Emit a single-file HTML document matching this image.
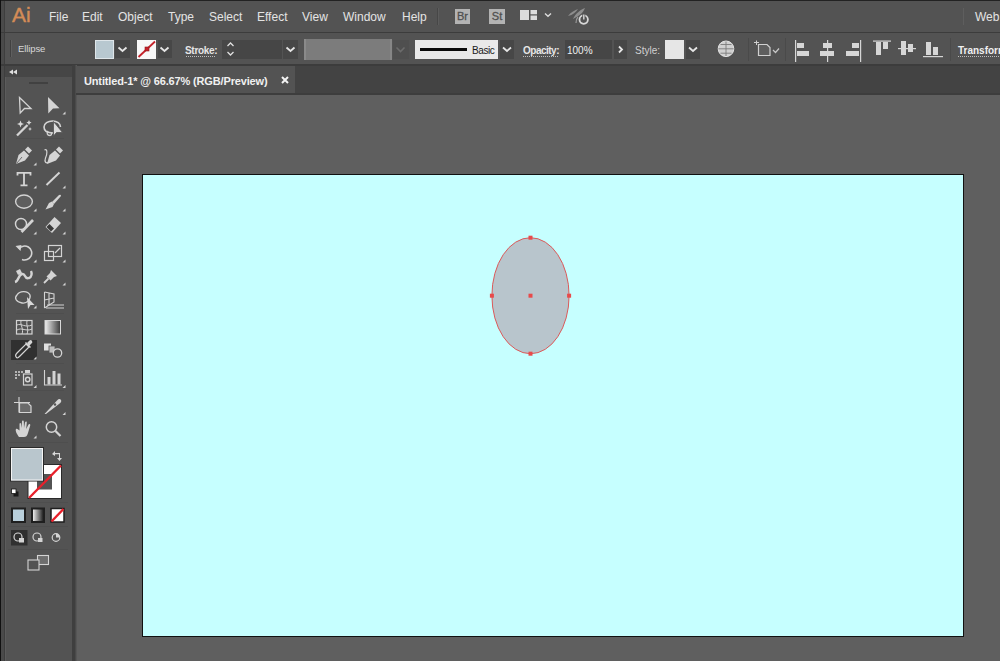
<!DOCTYPE html>
<html><head><meta charset="utf-8">
<style>
*{margin:0;padding:0;box-sizing:border-box}
html,body{width:1000px;height:661px;overflow:hidden;background:#535353;font-family:"Liberation Sans",sans-serif;}
.a{position:absolute}
.mt{position:absolute;top:10px;font-size:12px;color:#e4e4e4;line-height:14px;white-space:nowrap}
.ct{position:absolute;font-size:10px;color:#dcdcdc;line-height:12px;white-space:nowrap}
</style></head><body>
<!-- outer frame -->
<div class="a" style="left:0;top:0;width:1000px;height:1px;background:#222"></div>
<div class="a" style="left:0;top:0;width:1px;height:661px;background:#111"></div>
<div class="a" style="left:1px;top:1px;width:3px;height:660px;background:#4a4a4a"></div>
<div class="a" style="left:4px;top:1px;width:1px;height:660px;background:#3e3e3e"></div>
<!-- menubar -->
<div class="a" style="left:5px;top:1px;width:995px;height:31px;background:#535353"></div>
<div class="a" style="left:1px;top:32px;width:999px;height:1px;background:#3c3c3c"></div>
<div class="a" style="left:12px;top:3px;font-size:21px;color:#d48c57;line-height:24px;font-weight:normal;letter-spacing:0px;-webkit-text-stroke:0.4px #d48c57">Ai</div>
<div class="mt" style="left:49px">File</div>
<div class="mt" style="left:82px">Edit</div>
<div class="mt" style="left:118px">Object</div>
<div class="mt" style="left:168px">Type</div>
<div class="mt" style="left:209px">Select</div>
<div class="mt" style="left:257px">Effect</div>
<div class="mt" style="left:302px">View</div>
<div class="mt" style="left:343px">Window</div>
<div class="mt" style="left:402px">Help</div>
<div class="mt" style="left:975px">Web</div>

<!-- control bar -->
<div class="a" style="left:5px;top:33px;width:995px;height:31px;background:#535353"></div>
<div class="a" style="left:1px;top:64px;width:999px;height:2px;background:#3c3c3c"></div>
<div class="ct" style="left:18px;top:43px;font-size:9.5px;letter-spacing:-0.1px;color:#d8d8d8">Ellipse</div>


<!-- menubar icons -->
<div class="a" style="left:437px;top:8px;width:1px;height:17px;background:#474747"></div>
<div class="a" style="left:438px;top:8px;width:1px;height:17px;background:#5c5c5c"></div>
<div class="a" style="left:455px;top:9px;width:15px;height:15px;background:#b3b3b3;color:#505050;font-size:11px;font-weight:normal;line-height:15px;text-align:center;letter-spacing:0px;-webkit-text-stroke:0.3px #505050">Br</div>
<div class="a" style="left:489px;top:9px;width:16px;height:15px;background:#b3b3b3;color:#505050;font-size:11px;font-weight:normal;line-height:15px;text-align:center;letter-spacing:0px;-webkit-text-stroke:0.3px #505050">St</div>
<div class="a" style="left:963px;top:8px;width:1px;height:17px;background:#5e5e5e"></div>
<svg class="a" style="left:0;top:0" width="1000" height="66">
  <rect x="520" y="10" width="9" height="10" fill="#dcdcdc"/>
  <rect x="530.5" y="10" width="6.5" height="4.3" fill="#dcdcdc"/>
  <rect x="530.5" y="15.5" width="6.5" height="4.5" fill="#dcdcdc"/>
  <path d="M545,13.5 L548,16.3 L551,13.5" fill="none" stroke="#dcdcdc" stroke-width="1.4"/>
  <path d="M568,16 C571,12 575,10 578,9 C576,12 573,15 568,16 Z" fill="#8e8e8e"/>
  <path d="M573,19 C575,14 580,10 585,8 C583,13 579,16 573,19 Z" fill="#8e8e8e"/>
  <path d="M576,23 C576,20 577,18 578,17" stroke="#9a9a9a" stroke-width="1.2" fill="none"/>
  <circle cx="583.7" cy="19.6" r="4.2" fill="#535353" stroke="#d8d8d8" stroke-width="1.8"/>
  <path d="M583.8,14 L583.8,19.5" stroke="#535353" stroke-width="3"/>
  <path d="M583.8,14.5 L583.8,19.5" stroke="#d8d8d8" stroke-width="1.4"/>
  <!-- control bar -->
  <path d="M10.5,40 L10.5,57" stroke="#414141" stroke-width="1"/>
  <path d="M11.5,40 L11.5,57" stroke="#5f5f5f" stroke-width="1"/>
  <rect x="95.5" y="40.5" width="18" height="18" fill="#b8c8d0" stroke="#dfe6ea" stroke-width="1"/>
  <rect x="115" y="40" width="15" height="18" fill="#474747"/>
  <path d="M118.5,47.5 L122.5,51 L126.5,47.5" fill="none" stroke="#e6e6e6" stroke-width="1.8"/>
  <rect x="137" y="40" width="19" height="19" fill="#f8f8f8"/>
  <path d="M138.5,57 L155,41.5" stroke="#c4222a" stroke-width="1.8"/>
  <rect x="145" y="47" width="4" height="4" fill="#c8202a" stroke="#8a1a1a" stroke-width="0.6"/>
  <rect x="158" y="40" width="14" height="18" fill="#474747"/>
  <path d="M160.5,47.5 L164.5,51 L168.5,47.5" fill="none" stroke="#e6e6e6" stroke-width="1.8"/>
  <path d="M186,56.5 L216,56.5" stroke="#bdbdbd" stroke-width="1" stroke-dasharray="1,1"/>
  <rect x="222" y="40" width="18" height="19" fill="#474747"/>
  <path d="M227.5,46 L230.5,43 L233.5,46 M227.5,52 L230.5,55 L233.5,52" fill="none" stroke="#e0e0e0" stroke-width="1.3"/>
  <rect x="240" y="40" width="42" height="19" fill="#464646"/>
  <rect x="283" y="40" width="15" height="19" fill="#474747"/>
  <path d="M286.5,47.5 L290.5,51 L294.5,47.5" fill="none" stroke="#e6e6e6" stroke-width="1.8"/>
  <rect x="304" y="39" width="88" height="21" fill="#7c7c7c"/>
  <rect x="304" y="39" width="2" height="21" fill="#8a8a8a"/>
  <rect x="390" y="39" width="2" height="21" fill="#868686"/>
  <rect x="393" y="40" width="16" height="19" fill="#4f4f4f"/><path d="M396.5,47.5 L400.5,51.5 L404.5,47.5" fill="none" stroke="#6c6c6c" stroke-width="1.6"/>
  <rect x="415" y="40" width="83" height="19" fill="#e9e9e9"/>
  <rect x="420" y="48" width="47" height="3" fill="#0a0a0a"/>
  <rect x="500" y="40" width="14" height="19" fill="#474747"/>
  <path d="M503,47.5 L507,51 L511,47.5" fill="none" stroke="#e6e6e6" stroke-width="1.8"/>
  <path d="M523,56.5 L558,56.5" stroke="#bdbdbd" stroke-width="1" stroke-dasharray="1,1"/>
  <rect x="565" y="40" width="47" height="19" fill="#464646"/>
  <rect x="614" y="40" width="13" height="19" fill="#474747"/>
  <path d="M619,46.5 L622,49.5 L619,52.5" fill="none" stroke="#e6e6e6" stroke-width="1.8"/>
  <rect x="665" y="40" width="19" height="19" fill="#e6e6e6"/>
  <rect x="686" y="40" width="14" height="19" fill="#474747"/>
  <path d="M689,47.5 L693,51 L697,47.5" fill="none" stroke="#e6e6e6" stroke-width="1.8"/>
  <circle cx="726" cy="48.8" r="7.8" fill="#d0d0d0" stroke="#e2e2e2" stroke-width="1"/>
  <path d="M718.5,48.8 L733.5,48.8 M726,41.5 L726,56 M720.5,44.5 L731.5,44.5 M720.5,53.2 L731.5,53.2" stroke="#7a7a7a" stroke-width="0.9"/>
  <path d="M748.5,38 L748.5,61" stroke="#4a4a4a" stroke-width="1"/>
  <path d="M756.5,40.5 L756.5,45 M754,42.5 L759,42.5" stroke="#cfcfcf" stroke-width="1"/>
  <path d="M758.5,44.5 L767,44.5 L770,47.5 L770,55.5 L758.5,55.5 Z" fill="#5e5e5e" stroke="#d0d0d0" stroke-width="1.2"/>
  <path d="M773,50 L775.5,52.5 L779,48.5" fill="none" stroke="#c8c8c8" stroke-width="1.2"/>
  <path d="M785.5,38 L785.5,61" stroke="#4a4a4a" stroke-width="1"/>
  <g fill="#d6d6d6">
   <rect x="795" y="40" width="1.2" height="22"/><rect x="797" y="43" width="7" height="5"/><rect x="797" y="51" width="12" height="5"/>
   <rect x="827" y="40" width="1.2" height="22"/><rect x="823" y="43" width="9" height="5"/><rect x="820" y="51" width="14" height="5"/>
   <rect x="860" y="40" width="1.2" height="22"/><rect x="852" y="43" width="7" height="5"/><rect x="846" y="51" width="13" height="5"/>
   <rect x="873" y="40.5" width="18" height="1.2"/><rect x="876" y="42" width="5" height="13"/><rect x="883" y="42" width="5" height="7"/>
   <rect x="898" y="48" width="18" height="1.2"/><rect x="901" y="41" width="5" height="14"/><rect x="908" y="44" width="5" height="8"/>
   <rect x="923" y="56" width="20" height="1.2"/><rect x="926" y="42" width="5" height="13"/><rect x="933" y="47" width="5" height="8"/>
  </g>
  <path d="M950.5,38 L950.5,61" stroke="#4a4a4a" stroke-width="1"/>
  <path d="M958,56.5 L1000,56.5" stroke="#bdbdbd" stroke-width="1" stroke-dasharray="1,1"/>
</svg>
<div class="ct" style="left:185px;top:45px;font-weight:bold;color:#e6e6e6;letter-spacing:-0.3px">Stroke:</div>
<div class="a" style="left:472px;top:45px;font-size:10px;line-height:12px;color:#1a1a1a;letter-spacing:-0.4px">Basic</div>
<div class="ct" style="left:523px;top:45px;font-weight:bold;color:#e6e6e6;letter-spacing:-0.5px">Opacity:</div>
<div class="ct" style="left:567px;top:45px;color:#f0f0f0">100%</div>
<div class="ct" style="left:635px;top:45px;color:#d0d0d0">Style:</div>
<div class="ct" style="left:958px;top:45px;font-weight:bold;color:#f0f0f0">Transform</div>

<!-- tool panel -->
<div class="a" style="left:5px;top:66px;width:67px;height:595px;background:#535353"></div>
<div class="a" style="left:5px;top:66px;width:67px;height:11px;background:#464646"></div>
<div class="a" style="left:29px;top:82px;width:19px;height:2px;background:#414141"></div>
<div class="a" style="left:5px;top:77px;width:1px;height:584px;background:#5c5c5c"></div>
<div class="a" style="left:72px;top:65px;width:3px;height:596px;background:#3f3f3f"></div>
<div class="a" style="left:75px;top:65px;width:1px;height:596px;background:#4a4a4a"></div>
<div class="a" style="left:76px;top:65px;width:1px;height:596px;background:#565656"></div>

<!-- document area -->
<div class="a" style="left:76px;top:66px;width:924px;height:29px;background:#434343"></div>
<div class="a" style="left:76px;top:93px;width:924px;height:2px;background:#3d3d3d"></div>
<div class="a" style="left:76px;top:66px;width:219px;height:27px;background:#535353"></div>
<div class="a" style="left:84px;top:75px;font-size:11px;font-weight:bold;color:#f0f0f0;line-height:13px;letter-spacing:-0.15px">Untitled-1* @ 66.67% (RGB/Preview)</div>
<svg class="a" style="left:280px;top:75px" width="10" height="10"><path d="M2,2 L8,8 M8,2 L2,8" stroke="#f4f4f4" stroke-width="2"/></svg>
<div class="a" style="left:77px;top:95px;width:923px;height:566px;background:#5f5f5f"></div>

<!-- artboard -->
<div class="a" style="left:142px;top:174px;width:822px;height:463px;background:#c6ffff;border:1px solid #111"></div>
<svg class="a" style="left:0;top:0" width="1000" height="661">
  <ellipse cx="530.5" cy="295.7" rx="38.6" ry="58" fill="#b8c5cc" stroke="#dc5a5a" stroke-width="1"/>
  <g fill="#e84a4a">
  <rect x="528.5" y="235.7" width="4" height="4"/>
  <rect x="528.5" y="351.7" width="4" height="4"/>
  <rect x="489.9" y="293.7" width="4" height="4"/>
  <rect x="567.1" y="293.7" width="4" height="4"/>
  <rect x="528.5" y="293.7" width="4" height="4"/>
  </g>
</svg>

<!-- tool icons -->
<svg class="a" style="left:0;top:0" width="80" height="661" fill="none" stroke="#d4d4d4" stroke-width="1.2">
  <path d="M9,72 L13,69.5 L13,74.5 Z M13,72 L17,69.5 L17,74.5 Z" fill="#e0e0e0" stroke="none"/>
  <!-- selection -->
  <path d="M19.5,97.5 L31,108.5 L24.5,108.5 L20.2,113 Z" stroke-width="1.3"/>
  <path d="M48,97 L59.5,108.3 L53,108.5 L48.3,113.5 Z" fill="#d4d4d4" stroke="none"/>
  <!-- wand -->
  <path d="M17,135.5 L27.5,125" stroke-width="2.3"/>
  <path d="M20.5,120.5 l1,2.5 l2.5,1 l-2.5,1 l-1,2.5 l-1,-2.5 l-2.5,-1 l2.5,-1z" fill="#d8d8d8" stroke="none"/>
  <path d="M29,120 l0.8,1.8 l1.8,0.8 l-1.8,0.8 l-0.8,1.8 l-0.8,-1.8 l-1.8,-0.8 l1.8,-0.8z" fill="#d8d8d8" stroke="none"/>
  <path d="M30,127 l0.6,1.4 l1.4,0.6 l-1.4,0.6 l-0.6,1.4 l-0.6,-1.4 l-1.4,-0.6 l1.4,-0.6z" fill="#d8d8d8" stroke="none"/>
  <!-- lasso -->
  <path d="M53,133 C47,133 44,130.5 44,127 C44,123.5 48,121 52.5,121 C57,121 60.5,123.5 60.5,127" stroke-width="1.6"/>
  <path d="M48,131 C46.5,133 47,135.5 50,135.5 C51.5,135.5 52,134 51,132.5" stroke-width="1.3"/>
  <path d="M53.5,121.5 L53.5,136 L56.5,132.5 L62.5,132.5 Z" fill="#dadada" stroke="#535353" stroke-width="0.8"/>
  <!-- pen -->
  <path d="M16,164 L18.5,155 L24,150.5 L29,155.5 L25,160.5 Z" fill="#d4d4d4" stroke="none"/>
  <path d="M25,149.5 L28,146.5 L32,150.5 L29,153.5 Z" fill="#d4d4d4" stroke="none"/>
  <path d="M16.5,163.5 L22,157" stroke="#535353" stroke-width="0.8"/>
  <!-- curvature pen -->
  <path d="M47,164 L49.5,155 L55,150.5 L60,155.5 L56,160.5 Z" fill="#d4d4d4" stroke="none"/>
  <path d="M56,149.5 L59,146.5 L63,150.5 L60,153.5 Z" fill="#d4d4d4" stroke="none"/>
  <path d="M44.5,150 C48,148 47,155 45.5,158 C44,162 46,164 49,162" stroke-width="1.2"/>
  <!-- type -->
  <path d="M17.5,175.5 L17.5,172.8 L30.5,172.8 L30.5,175.5 M24,172.8 L24,185.3 M20.5,185.3 L27.5,185.3" stroke-width="1.8"/>
  <!-- line -->
  <path d="M46.5,185 L59.5,172.5" stroke-width="1.9"/>
  <!-- ellipse -->
  <ellipse cx="24" cy="201.6" rx="8.4" ry="6.6" stroke-width="1.4" fill="#5e5e5e"/>
  <!-- brush -->
  <path d="M45.5,209.5 L49,203 L52,201.5 L54,204 L52.5,207 Z" fill="#d4d4d4" stroke="none"/>
  <path d="M52,202 L59,195 Q61,194 61,196 L54,204 Z" fill="#d4d4d4" stroke="none"/>
  <!-- shaper -->
  <circle cx="21" cy="224" r="5.5" stroke-width="1.4"/>
  <path d="M21.5,232 L33,220" stroke-width="2.6"/>
  <!-- eraser -->
  <path d="M45.5,227 L54.5,217 L61,223 L52,233 Z" fill="#d4d4d4" stroke="none"/>
  <path d="M46.5,227 L49.5,224 L54,228.5 L51,231.5 Z" fill="#3a3a3a" stroke="none"/>
  <!-- rotate -->
  <path d="M19,249 A7,7 0 1 1 22,259.5" stroke-width="1.6"/>
  <path d="M15.5,246 L21.5,245 L20.5,251 Z" fill="#d4d4d4" stroke="none"/>
  <!-- scale -->
  <rect x="48.5" y="245.5" width="13" height="11" stroke-width="1.2"/>
  <rect x="44.5" y="251.5" width="9" height="9" stroke-width="1.2"/>
  <path d="M55,253 L60,248" stroke-width="1.3"/>
  <!-- warp -->
  <path d="M15,282 C19,281 18,275 22,274 C26,273 24,280 29,278 C32,277 32,273 31,271" stroke-width="2.4"/>
  <path d="M16,271 L20,269 L22,273 L18,275 Z" fill="#d4d4d4" stroke="none"/>
  <!-- pin -->
  <path d="M51,270 L57,276 L54,277 L50.5,280.5 L46.5,276.5 L50,273 Z" fill="#d4d4d4" stroke="none"/>
  <path d="M44,283 L48.5,278.5" stroke-width="1.8"/>
  <!-- shape builder -->
  <path d="M17,295 C20,290 28,291 30,295 C31,299 27,304 22,303 C16,302 14,298 17,295 Z" stroke-width="1.3"/>
  <path d="M27,297 L34.5,305 L30.5,305 L28,309 Z" fill="#d8d8d8" stroke="none"/>
  <!-- perspective -->
  <path d="M44.5,292 L44.5,308 M44.5,292 L54,294 L54,302 L44.5,308 M44.5,300 L54,298 M49,293 L49,305" stroke-width="1.1"/>
  <path d="M47,305 L64,305 M46,308 L64,308" stroke-width="1"/>
  <!-- mesh -->
  <rect x="16.5" y="320.5" width="15.5" height="13.5" stroke-width="1.2"/>
  <path d="M17,325 C21,323 25,328 32,325 M17,330 C22,327 26,332 32,329 M21,321 C20,325 24,329 22,334 M27,321 C26,325 29,329 27,334" stroke-width="1"/>
  <!-- gradient -->
  <defs><linearGradient id="gr" x1="0" x2="1" y1="0" y2="0"><stop offset="0" stop-color="#f0f0f0"/><stop offset="1" stop-color="#3a3a3a"/></linearGradient>
  <linearGradient id="gr2" x1="0" x2="1" y1="0" y2="0"><stop offset="0" stop-color="#ffffff"/><stop offset="1" stop-color="#111"/></linearGradient></defs>
  <rect x="45" y="320.5" width="15.5" height="13.5" fill="url(#gr)" stroke="#d8d8d8" stroke-width="1"/>
  <!-- eyedropper selected -->
  <rect x="11" y="340" width="26" height="20" fill="#303030" stroke="none"/>
  <path d="M16.5,357.5 C15,356 15.5,354.5 17,353 L26,344 L29,347 L20,356 C18.5,357.5 17.5,358.5 16.5,357.5 Z" stroke-width="1.2"/>
  <path d="M27,343 L29.5,340.5 Q31,339.5 32,341 Q33,342.5 31.5,343.5 L29,346 Z" fill="#d4d4d4" stroke="none"/>
  <path d="M25.5,342.5 L30.5,347.5" stroke-width="1.5"/>
  <!-- blend -->
  <rect x="44" y="343.5" width="7" height="7" fill="#e0e0e0" stroke="none"/>
  <rect x="49" y="346" width="6" height="7" fill="#bdbdbd" stroke="#535353" stroke-width="0.8"/>
  <circle cx="57.5" cy="353" r="4.2" fill="#535353" stroke-width="1.3"/>
  <!-- symbol sprayer -->
  <path d="M15,372 h2 M15,375 h2 M15,378 h2 M18,372 h2 M18,375 h2 M21,372 h2" stroke-width="1.6"/>
  <rect x="23.5" y="374" width="8.5" height="11" stroke-width="1.2"/>
  <circle cx="27.7" cy="379.5" r="2.2" stroke-width="1.4"/>
  <rect x="25" y="370" width="5" height="3" fill="#d4d4d4" stroke="none"/>
  <!-- graph -->
  <path d="M44.5,370 L44.5,385 L62,385" stroke-width="1.1"/>
  <rect x="47.5" y="377" width="3" height="7.5" fill="#d4d4d4" stroke="none"/>
  <rect x="52.5" y="371" width="3" height="13.5" fill="#d4d4d4" stroke="none"/>
  <rect x="57.5" y="373.5" width="3" height="11" fill="#d4d4d4" stroke="none"/>
  <!-- artboard -->
  <path d="M19,397 L19,412.5 M14,402.5 L30,402.5" stroke-width="1.1"/>
  <path d="M19.5,403 L28,403 L31,406 L31,412.5 L19.5,412.5 Z" stroke-width="1.2" fill="#6a6a6a"/>
  <!-- slice -->
  <path d="M44.5,414 L57,400.5 Q59.5,398 61,400 Q62,402 59,404 L46,414 Z" fill="#d4d4d4" stroke="none"/>
  <circle cx="55" cy="404.5" r="1.2" fill="#535353" stroke="none"/>
  <!-- hand -->
  <path d="M19,437 C17,434 15,431 16,429 C17,428 18.5,429.5 19.5,430.5 L19.5,424 C19.5,422.5 21,422.5 21,424 L21.5,428 L22,421.5 C22,420 23.8,420 23.8,421.5 L24,428 L25,422.5 C25.3,421 27,421 26.8,422.5 L26.2,429 L28.5,424.5 C29.3,423.4 30.7,424 30.2,425.5 L28,433 C27,436 26,437 24,437 Z" fill="#d4d4d4" stroke="none"/>
  <!-- zoom -->
  <circle cx="51.5" cy="427" r="5.2" stroke-width="1.5"/>
  <path d="M55.5,431 L60.5,436" stroke-width="2.2"/>
  <!-- hidden-tool triangles -->
  <g fill="#d4d4d4" stroke="none">
  <path d="M62.5,114.5 L65.5,111.5 L65.5,114.5 Z"/>
  <path d="M33.5,165.5 L36.5,162.5 L36.5,165.5 Z"/>
  <path d="M33.5,188.5 L36.5,185.5 L36.5,188.5 Z"/><path d="M62.5,188.5 L65.5,185.5 L65.5,188.5 Z"/>
  <path d="M33.5,211.5 L36.5,208.5 L36.5,211.5 Z"/><path d="M62.5,211.5 L65.5,208.5 L65.5,211.5 Z"/>
  <path d="M33.5,234.5 L36.5,231.5 L36.5,234.5 Z"/><path d="M62.5,234.5 L65.5,231.5 L65.5,234.5 Z"/>
  <path d="M33.5,262.5 L36.5,259.5 L36.5,262.5 Z"/><path d="M62.5,262.5 L65.5,259.5 L65.5,262.5 Z"/>
  <path d="M33.5,285.5 L36.5,282.5 L36.5,285.5 Z"/><path d="M62.5,285.5 L65.5,282.5 L65.5,285.5 Z"/>
  <path d="M33.5,308.5 L36.5,305.5 L36.5,308.5 Z"/>
  <path d="M33.5,359.5 L36.5,356.5 L36.5,359.5 Z"/>
  <path d="M33.5,388 L36.5,385 L36.5,388 Z"/><path d="M62.5,388 L65.5,385 L65.5,388 Z"/>
  <path d="M62.5,415 L65.5,412 L65.5,415 Z"/>
  <path d="M33.5,438.5 L36.5,435.5 L36.5,438.5 Z"/>
  </g>
  <!-- fill / stroke -->
  <rect x="28" y="464.5" width="33.5" height="34" fill="#ffffff" stroke="#2a2a2a" stroke-width="1"/>
  <rect x="37" y="474" width="15" height="15.5" fill="#535353" stroke="none"/>
  <path d="M29,498 L61,465.5" stroke="#e8202a" stroke-width="2.4"/>
  <rect x="10.5" y="447.5" width="33" height="33.5" fill="#b9c6cd" stroke="#2a2a2a" stroke-width="1"/>
  <rect x="11.5" y="448.5" width="31" height="31.5" fill="none" stroke="#f4f4f4" stroke-width="1"/>
  <path d="M52,454 L55,451 L55,453 L60,453 L60,458 L62,458 L59.5,461 L57,458 L59,458 L59,454.2 L55,454.2 L55,456 Z" fill="#d8d8d8" stroke="none"/>
  <rect x="13.5" y="491.5" width="5" height="5" fill="#1a1a1a" stroke="none"/>
  <rect x="11.5" y="489" width="4.5" height="4.5" fill="#ffffff" stroke="#1a1a1a" stroke-width="0.8"/>
  <!-- mode buttons -->
  <rect x="12" y="508.5" width="13" height="13.5" fill="#b9cfdb" stroke="#1f1f1f" stroke-width="2"/>
  <rect x="32" y="508.5" width="12" height="13.5" fill="url(#gr2)" stroke="#1f1f1f" stroke-width="2"/>
  <rect x="51" y="508.5" width="13" height="13.5" fill="#ffffff" stroke="#1f1f1f" stroke-width="1.5"/>
  <path d="M51.5,521.5 L63.5,509" stroke="#e8202a" stroke-width="2.4"/>
  <!-- draw modes -->
  <rect x="11" y="530" width="16.5" height="15.5" fill="#303030" stroke="none"/>
  <circle cx="18" cy="537" r="4" stroke-width="1.2"/>
  <rect x="19" y="538" width="5" height="4.5" fill="#d4d4d4" stroke="none"/>
  <circle cx="37" cy="537" r="4" stroke-width="1.2"/>
  <rect x="38" y="538" width="4.5" height="4" fill="#d4d4d4" stroke="none"/>
  <circle cx="56" cy="537.5" r="3.8" stroke-width="1.2"/>
  <path d="M56,537.5 L59.8,537.5 A3.8,3.8 0 0 0 56,533.7 Z" fill="#d4d4d4" stroke="none"/>
  <!-- screen mode -->
  <rect x="37.5" y="555.5" width="11" height="9" stroke-width="1.1" fill="#6e6e6e"/>
  <rect x="28" y="560" width="11" height="10" stroke-width="1.1" fill="#535353"/>
  <!-- group separators -->
  <path d="M16,138.5 L64,138.5 M16,313.5 L64,313.5 M16,363.5 L64,363.5 M16,390.5 L64,390.5 M8,442.5 L68,442.5 M8,502.5 L68,502.5 M8,526.5 L68,526.5 M8,549.5 L68,549.5" stroke="#4e4e4e" stroke-width="1"/>
</svg>
</body></html>
